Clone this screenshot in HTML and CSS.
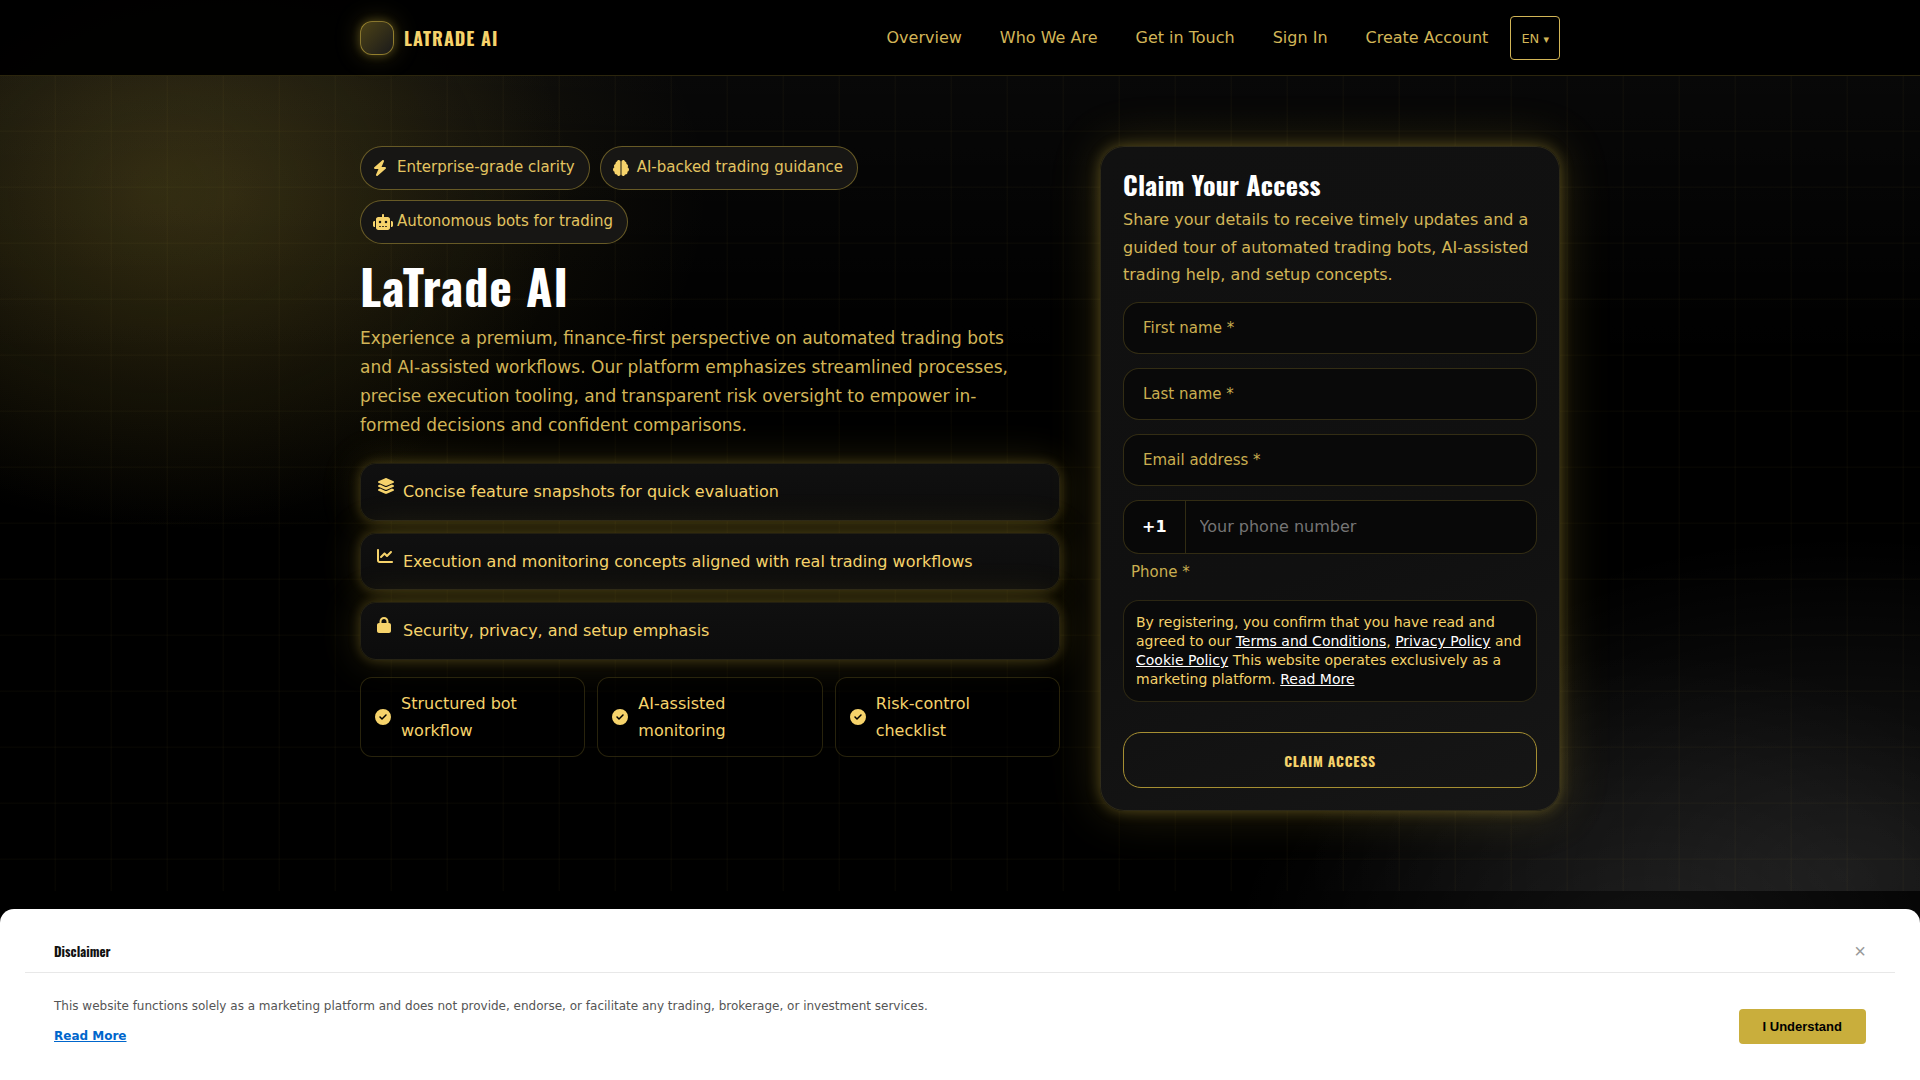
FILE: index.html
```html
<!DOCTYPE html>
<html lang="en">
<head>
    <meta charset="UTF-8">
    <meta name="viewport" content="width=device-width, initial-scale=1.0">
    <title>LaTrade AI</title>
    <link rel="stylesheet" href="styles.css">
</head>
<body>
<header class="header">
    <div class="container header-inner">
        <a class="brand" href="#">
            <span class="brand-mark"></span>
            <span class="brand-name">LATRADE AI</span>
        </a>
        <nav class="nav">
            <a href="#overview">Overview</a>
            <a href="#about">Who We Are</a>
            <a href="#contact">Get in Touch</a>
            <a href="#login">Sign In</a>
            <a href="#signup">Create Account</a>
            <button type="button" class="lang">EN <span class="caret">▾</span></button>
        </nav>
    </div>
</header>

<main class="hero">
    <div class="container hero-grid">
        <section class="intro">
            <div class="chips">
                <span class="chip">
                    <span class="chip-icon"><svg width="14" height="16" viewBox="0 0 448 512"><path d="M349.400 44.600c5.900-13.700 1.500-29.700-10.600-38.500s-28.600-8-39.900 1.800l-256 224c-10 8.800-13.600 22.900-8.900 35.300S50.700 288 64 288H175.500L98.600 467.400c-5.900 13.700-1.500 29.700 10.600 38.500s28.600 8 39.900-1.800l256-224c10-8.800 13.600-22.900 8.900-35.300s-16.600-20.700-30-20.700H272.500L349.400 44.600z"/></svg></span>
                    Enterprise-grade clarity
                </span>
                <span class="chip">
                    <span class="chip-icon"><svg width="16" height="16" viewBox="0 0 512 512"><path d="M184 0c30.900 0 56 25.100 56 56V456c0 30.900-25.100 56-56 56c-28.900 0-52.700-21.900-55.700-50.100c-5.200 1.400-10.700 2.100-16.300 2.100c-35.300 0-64-28.700-64-64c0-7.400 1.300-14.600 3.600-21.200C21.400 367.400 0 338.200 0 304c0-31.900 18.700-59.500 45.800-72.300C37.100 220.800 32 207 32 192c0-30.700 21.600-56.300 50.400-62.600C80.800 123.900 80 118 80 112c0-29.900 20.600-55.100 48.300-62.100C131.300 21.900 155.100 0 184 0zM328 0c28.900 0 52.600 21.900 55.700 49.900c27.800 7 48.300 32.100 48.300 62.100c0 6-.8 11.900-2.400 17.400c28.800 6.200 50.400 31.900 50.400 62.600c0 15-5.100 28.800-13.800 39.700C493.300 244.500 512 272.100 512 304c0 34.200-21.400 63.400-51.600 74.800c2.300 6.600 3.600 13.800 3.600 21.200c0 35.300-28.700 64-64 64c-5.600 0-11.100-.7-16.300-2.100c-3 28.200-26.800 50.100-55.700 50.100c-30.900 0-56-25.100-56-56V56c0-30.900 25.100-56 56-56z"/></svg></span>
                    AI-backed trading guidance
                </span>
                <span class="chip">
                    <span class="chip-icon"><svg width="20" height="16" viewBox="0 0 640 512"><path d="M320 0c17.700 0 32 14.300 32 32V96H472c39.800 0 72 32.200 72 72V440c0 39.800-32.200 72-72 72H168c-39.800 0-72-32.200-72-72V168c0-39.800 32.200-72 72-72H288V32c0-17.700 14.300-32 32-32zM208 384c-8.800 0-16 7.200-16 16s7.200 16 16 16h32c8.800 0 16-7.200 16-16s-7.200-16-16-16H208zm96 0c-8.800 0-16 7.200-16 16s7.200 16 16 16h32c8.800 0 16-7.200 16-16s-7.200-16-16-16H304zm96 0c-8.800 0-16 7.200-16 16s7.200 16 16 16h32c8.800 0 16-7.200 16-16s-7.200-16-16-16H400zM264 256a40 40 0 1 0-80 0 40 40 0 1 0 80 0zm152 40a40 40 0 1 0 0-80 40 40 0 1 0 0 80zM48 224H64V416H48c-26.500 0-48-21.500-48-48V272c0-26.500 21.500-48 48-48zm544 0c26.500 0 48 21.500 48 48v96c0 26.500-21.500 48-48 48H576V224h16z"/></svg></span>
                    Autonomous bots for trading
                </span>
            </div>

            <h1>LaTrade AI</h1>
            <p class="lead">Experience a premium, finance-first perspective on automated trading bots and AI-assisted workflows. Our platform emphasizes streamlined processes, precise execution tooling, and transparent risk oversight to empower in&shy;formed decisions and confident comparisons.</p>

            <ul class="features">
                <li>
                    <span class="feature-icon"><svg width="18" height="16" viewBox="0 0 576 512"><path d="M264.500 5.200c14.900-6.900 32.100-6.900 47 0l218.600 101c8.500 3.900 13.900 12.400 13.900 21.800s-5.400 17.900-13.900 21.800l-218.600 101c-14.900 6.900-32.100 6.900-47 0L45.900 149.800C37.400 145.800 32 137.300 32 128s5.400-17.900 13.900-21.800L264.500 5.200zM476.900 209.600l53.200 24.600c8.500 3.900 13.900 12.400 13.900 21.800s-5.400 17.900-13.900 21.800l-218.600 101c-14.900 6.900-32.100 6.900-47 0L45.900 277.800C37.400 273.800 32 265.300 32 256s5.400-17.900 13.900-21.800l53.200-24.600 152 70.200c23.400 10.800 50.400 10.800 73.800 0l152-70.200zm-152 198.200l152-70.200 53.200 24.600c8.500 3.900 13.900 12.400 13.900 21.800s-5.400 17.900-13.900 21.800l-218.600 101c-14.900 6.900-32.100 6.900-47 0L45.900 405.800C37.400 401.800 32 393.300 32 384s5.400-17.900 13.900-21.800l53.200-24.600 152 70.200c23.400 10.800 50.400 10.800 73.800 0z"/></svg></span>
                    <span>Concise feature snapshots for quick evaluation</span>
                </li>
                <li>
                    <span class="feature-icon"><svg width="16" height="16" viewBox="0 0 512 512"><path d="M64 64c0-17.700-14.300-32-32-32S0 46.300 0 64V400c0 44.200 35.800 80 80 80H480c17.700 0 32-14.300 32-32s-14.300-32-32-32H80c-8.800 0-16-7.200-16-16V64zm406.600 86.600c12.500-12.500 12.500-32.800 0-45.300s-32.800-12.500-45.300 0L320 210.700l-57.400-57.400c-12.500-12.500-32.800-12.500-45.300 0l-112 112c-12.500 12.500-12.500 32.800 0 45.300s32.800 12.500 45.300 0L240 221.300l57.400 57.400c12.500 12.500 32.800 12.500 45.300 0l128-128z"/></svg></span>
                    <span>Execution and monitoring concepts aligned with real trading workflows</span>
                </li>
                <li>
                    <span class="feature-icon"><svg width="14" height="16" viewBox="0 0 448 512"><path d="M144 144v48H304V144c0-44.200-35.800-80-80-80s-80 35.800-80 80zM80 192V144C80 64.500 144.500 0 224 0s144 64.500 144 144v48h16c35.300 0 64 28.700 64 64V448c0 35.300-28.700 64-64 64H64c-35.300 0-64-28.700-64-64V256c0-35.300 28.700-64 64-64H80z"/></svg></span>
                    <span>Security, privacy, and setup emphasis</span>
                </li>
            </ul>

            <ul class="checks">
                <li>
                    <svg width="16" height="16" viewBox="0 0 512 512"><path d="M256 512A256 256 0 1 0 256 0a256 256 0 1 0 0 512zM369 209L241 337c-9.400 9.400-24.600 9.400-33.900 0l-64-64c-9.400-9.400-9.400-24.600 0-33.900s24.600-9.400 33.900 0l47 47L335 175c9.400-9.400 24.600-9.400 33.900 0s9.400 24.600 0 33.900z"/></svg>
                    <span>Structured bot workflow</span>
                </li>
                <li>
                    <svg width="16" height="16" viewBox="0 0 512 512"><path d="M256 512A256 256 0 1 0 256 0a256 256 0 1 0 0 512zM369 209L241 337c-9.400 9.400-24.600 9.400-33.900 0l-64-64c-9.400-9.400-9.400-24.600 0-33.900s24.600-9.400 33.900 0l47 47L335 175c9.400-9.400 24.600-9.400 33.900 0s9.400 24.600 0 33.900z"/></svg>
                    <span>AI-assisted monitoring</span>
                </li>
                <li>
                    <svg width="16" height="16" viewBox="0 0 512 512"><path d="M256 512A256 256 0 1 0 256 0a256 256 0 1 0 0 512zM369 209L241 337c-9.400 9.400-24.600 9.400-33.900 0l-64-64c-9.400-9.400-9.400-24.600 0-33.900s24.600-9.400 33.900 0l47 47L335 175c9.400-9.400 24.600-9.400 33.900 0s9.400 24.600 0 33.900z"/></svg>
                    <span>Risk-control checklist</span>
                </li>
            </ul>
        </section>

        <form class="card">
            <h2>Claim Your Access</h2>
            <p class="card-text">Share your details to receive timely updates and a guided tour of automated trading bots, AI-assisted trading help, and setup concepts.</p>
            <input class="field" type="text" aria-label="First name" placeholder="First name *" required>
            <input class="field" type="text" aria-label="Last name" placeholder="Last name *" required>
            <input class="field" type="email" aria-label="Email address" placeholder="Email address *" required>
            <div class="phone">
                <span class="phone-code">+1</span>
                <input type="tel" id="phone" placeholder="Your phone number" required>
            </div>
            <label class="phone-label" for="phone">Phone *</label>
            <p class="consent">By registering, you confirm that you have read and agreed to our <a href="#terms">Terms and Conditions</a>, <a href="#privacy">Privacy Policy</a> and <a href="#cookies">Cookie Policy</a> This website operates exclusively as a marketing platform. <a href="#more">Read More</a></p>
            <button type="submit" class="submit">CLAIM ACCESS</button>
        </form>
    </div>
</main>

<aside class="disclaimer">
    <div class="disclaimer-head">
        <h3>Disclaimer</h3>
        <button type="button" class="close" aria-label="Close">×</button>
    </div>
    <div class="disclaimer-body">
        <div>
            <p>This website functions solely as a marketing platform and does not provide, endorse, or facilitate any trading, brokerage, or investment services.</p>
            <a href="#disclaimer">Read More</a>
        </div>
        <button type="button" class="accept">I Understand</button>
    </div>
</aside>
</body>
</html>
```
FILE: styles.css
```css
* {
    box-sizing: border-box;
}
:root {
    --gold: #f6d36b;
    --muted: #d2b557;
    --line: rgba(201, 174, 60, 0.22);
    --heading: 'Oswald', 'Liberation Sans Narrow', 'DejaVu Sans Condensed', sans-serif;
}
body {
    margin: 0;
    min-height: 100vh;
    font-family: 'DejaVu Sans', sans-serif;
    font-size: 16px;
    line-height: 1.72;
    color: var(--gold);
    background:
        radial-gradient(480px 340px at 12% 18%, rgba(201, 174, 60, 0.13), transparent),
        radial-gradient(420px 300px at 86% 88%, rgba(255, 255, 255, 0.07), transparent),
        #000;
}
h1, h2, h3, p, ul {
    margin: 0;
    padding: 0;
}
h1, h2, h3 {
    font-family: var(--heading);
    font-weight: 700;
    color: #fff;
}
h1 {
    letter-spacing: 0.02em;
}
h2 {
    letter-spacing: 0.01em;
}
ul {
    list-style: none;
}
svg {
    display: block;
    flex: none;
    fill: var(--gold);
}
.container {
    width: 100%;
    max-width: 1200px;
    margin: 0 auto;
}

/* header */
.header {
    background: rgba(0, 0, 0, 0.9);
    border-bottom: 1px solid rgba(201, 174, 60, 0.22);
}
.header-inner {
    display: flex;
    align-items: center;
    justify-content: space-between;
    padding: 16px 0 15px;
}
.brand {
    display: flex;
    align-items: center;
    gap: 10px;
    text-decoration: none;
}
.brand-mark {
    width: 34px;
    height: 34px;
    border: 1px solid rgba(201, 174, 60, 0.6);
    border-radius: 12px;
    background: linear-gradient(135deg, rgba(201, 174, 60, 0.38), rgba(255, 255, 255, 0.1));
    box-shadow: 0 0 10px rgba(201, 174, 60, 0.35), 0 0 26px rgba(201, 174, 60, 0.25);
}
.brand-name {
    font-family: var(--heading);
    font-size: 18px;
    font-weight: 700;
    line-height: 24px;
    letter-spacing: 1px;
    color: var(--gold);
}
.nav {
    display: flex;
    align-items: center;
    gap: 6px;
}
.nav a {
    padding: 0 16px;
    color: var(--muted);
    text-decoration: none;
}
.lang {
    height: 44px;
    padding: 0 10px;
    border: 1px solid var(--muted);
    border-radius: 4px;
    background: transparent;
    color: var(--muted);
    font-family: inherit;
    font-size: 13px;
}
.caret {
    font-size: 11px;
}

/* hero */
.hero {
    padding: 70px 0 80px;
    background:
        repeating-linear-gradient(90deg, transparent 0 54px, rgba(201, 174, 60, 0.03) 55px 56px),
        repeating-linear-gradient(180deg, transparent 0 54px, rgba(201, 174, 60, 0.03) 55px 56px),
        radial-gradient(420px 340px at 8% 14%, rgba(201, 174, 60, 0.14), transparent),
        radial-gradient(540px 340px at 96% 98%, rgba(255, 255, 255, 0.09), transparent),
        linear-gradient(rgba(255, 255, 255, 0.03), transparent 35%);
}
.hero-grid {
    display: grid;
    grid-template-columns: 35fr 23fr;
    gap: 40px;
    align-items: start;
}
.chips {
    display: flex;
    flex-wrap: wrap;
    gap: 10px;
}
.chip {
    display: flex;
    align-items: center;
    height: 44px;
    padding: 0 14px 0 12px;
    border: 1px solid rgba(201, 174, 60, 0.45);
    border-radius: 22px;
    background: #171614;
    font-size: 15px;
    color: #e3c461;
}
.chip-icon {
    width: 24px;
}
h1 {
    margin-top: 13px;
    font-size: 48px;
    line-height: 58px;
}
.lead {
    max-width: 660px;
    margin-top: 9px;
    font-size: 17px;
    line-height: 29px;
    color: var(--muted);
}
.features {
    display: grid;
    gap: 12px;
    margin-top: 23px;
}
.features li {
    display: flex;
    align-items: flex-start;
    padding: 14px 16px;
    border: 1px solid rgba(201, 174, 60, 0.12);
    border-radius: 16px;
    background: linear-gradient(#101010, #0c0c0c);
    box-shadow: 0 0 12px rgba(201, 174, 60, 0.28), 0 0 40px rgba(201, 174, 60, 0.2);
}
.feature-icon {
    width: 26px;
}
.checks {
    display: grid;
    grid-template-columns: repeat(3, 1fr);
    gap: 12px;
    margin-top: 17px;
}
.checks li {
    display: flex;
    align-items: center;
    gap: 10px;
    padding: 12px 14px;
    border: 1px solid rgba(201, 174, 60, 0.2);
    border-radius: 12px;
    background: rgba(0, 0, 0, 0.5);
    line-height: 27px;
}
.checks span {
    max-width: 130px;
}

/* form card */
.card {
    display: flex;
    flex-direction: column;
    padding: 22px;
    border: 1px solid rgba(201, 174, 60, 0.15);
    border-radius: 24px;
    background: linear-gradient(160deg, #111, #101010 60%, #161616);
    box-shadow: 0 0 14px rgba(201, 174, 60, 0.35), 0 0 50px rgba(201, 174, 60, 0.22);
}
h2 {
    font-size: 26px;
    line-height: 32px;
}
.card-text {
    margin: 5px 0 13px;
    color: var(--muted);
}
.field {
    height: 52px;
    margin-bottom: 14px;
    padding: 0 19px;
    border: 1px solid var(--line);
    border-radius: 16px;
    background: #090909;
    color: #fff;
    font-family: inherit;
    font-size: 15px;
}
.field::placeholder {
    color: #c9ae50;
    opacity: 1;
}
.phone {
    display: flex;
    height: 54px;
    border: 1px solid var(--line);
    border-radius: 16px;
    background: #080808;
    overflow: hidden;
}
.phone-code {
    display: flex;
    align-items: center;
    padding: 0 18px;
    border-right: 1px solid var(--line);
    color: #fff;
    font-weight: 700;
}
.phone input {
    flex: 1;
    min-width: 0;
    padding: 0 14px;
    border: 0;
    background: transparent;
    color: #fff;
    font-family: inherit;
    font-size: 16px;
}
.phone-label {
    margin: 6px 0 15px 8px;
    font-size: 15px;
    color: #c9ae50;
}
.consent {
    padding: 12px;
    border: 1px solid rgba(201, 174, 60, 0.18);
    border-radius: 16px;
    background: #0a0a0a;
    font-size: 14px;
    line-height: 19px;
}
.consent a {
    color: #fff;
}
.submit {
    height: 56px;
    margin-top: 30px;
    border: 1px solid #a68f32;
    border-radius: 18px;
    background: transparent;
    color: var(--gold);
    font-family: var(--heading);
    font-size: 14px;
    font-weight: 700;
    letter-spacing: 0.05em;
}

/* disclaimer bar, pinned over the page */
.disclaimer {
    position: fixed;
    right: 0;
    bottom: 0;
    left: 0;
    padding: 28px 25px 36px;
    border-radius: 14px 14px 0 0;
    background: #fff;
    color: #555;
    font-size: 12px;
    line-height: 16px;
}
.disclaimer-head {
    display: flex;
    align-items: center;
    justify-content: space-between;
    padding: 0 29px 7px;
    border-bottom: 1px solid #e8e8e8;
}
.disclaimer h3 {
    font-size: 13px;
    line-height: 28px;
    color: #111;
}
.close {
    padding: 0;
    border: 0;
    background: transparent;
    color: #999;
    font-family: 'Liberation Sans', sans-serif;
    font-size: 20px;
}
.disclaimer-body {
    display: flex;
    align-items: flex-end;
    justify-content: space-between;
    padding: 25px 29px 0;
}
.disclaimer-body a {
    display: inline-block;
    margin-top: 14px;
    color: #0066cc;
    font-weight: 700;
}
.accept {
    height: 35px;
    padding: 0 24px;
    border: 0;
    border-radius: 4px;
    background: #c9ae3c;
    color: #000;
    font-family: 'Liberation Sans', sans-serif;
    font-size: 13px;
    font-weight: 700;
}
```
